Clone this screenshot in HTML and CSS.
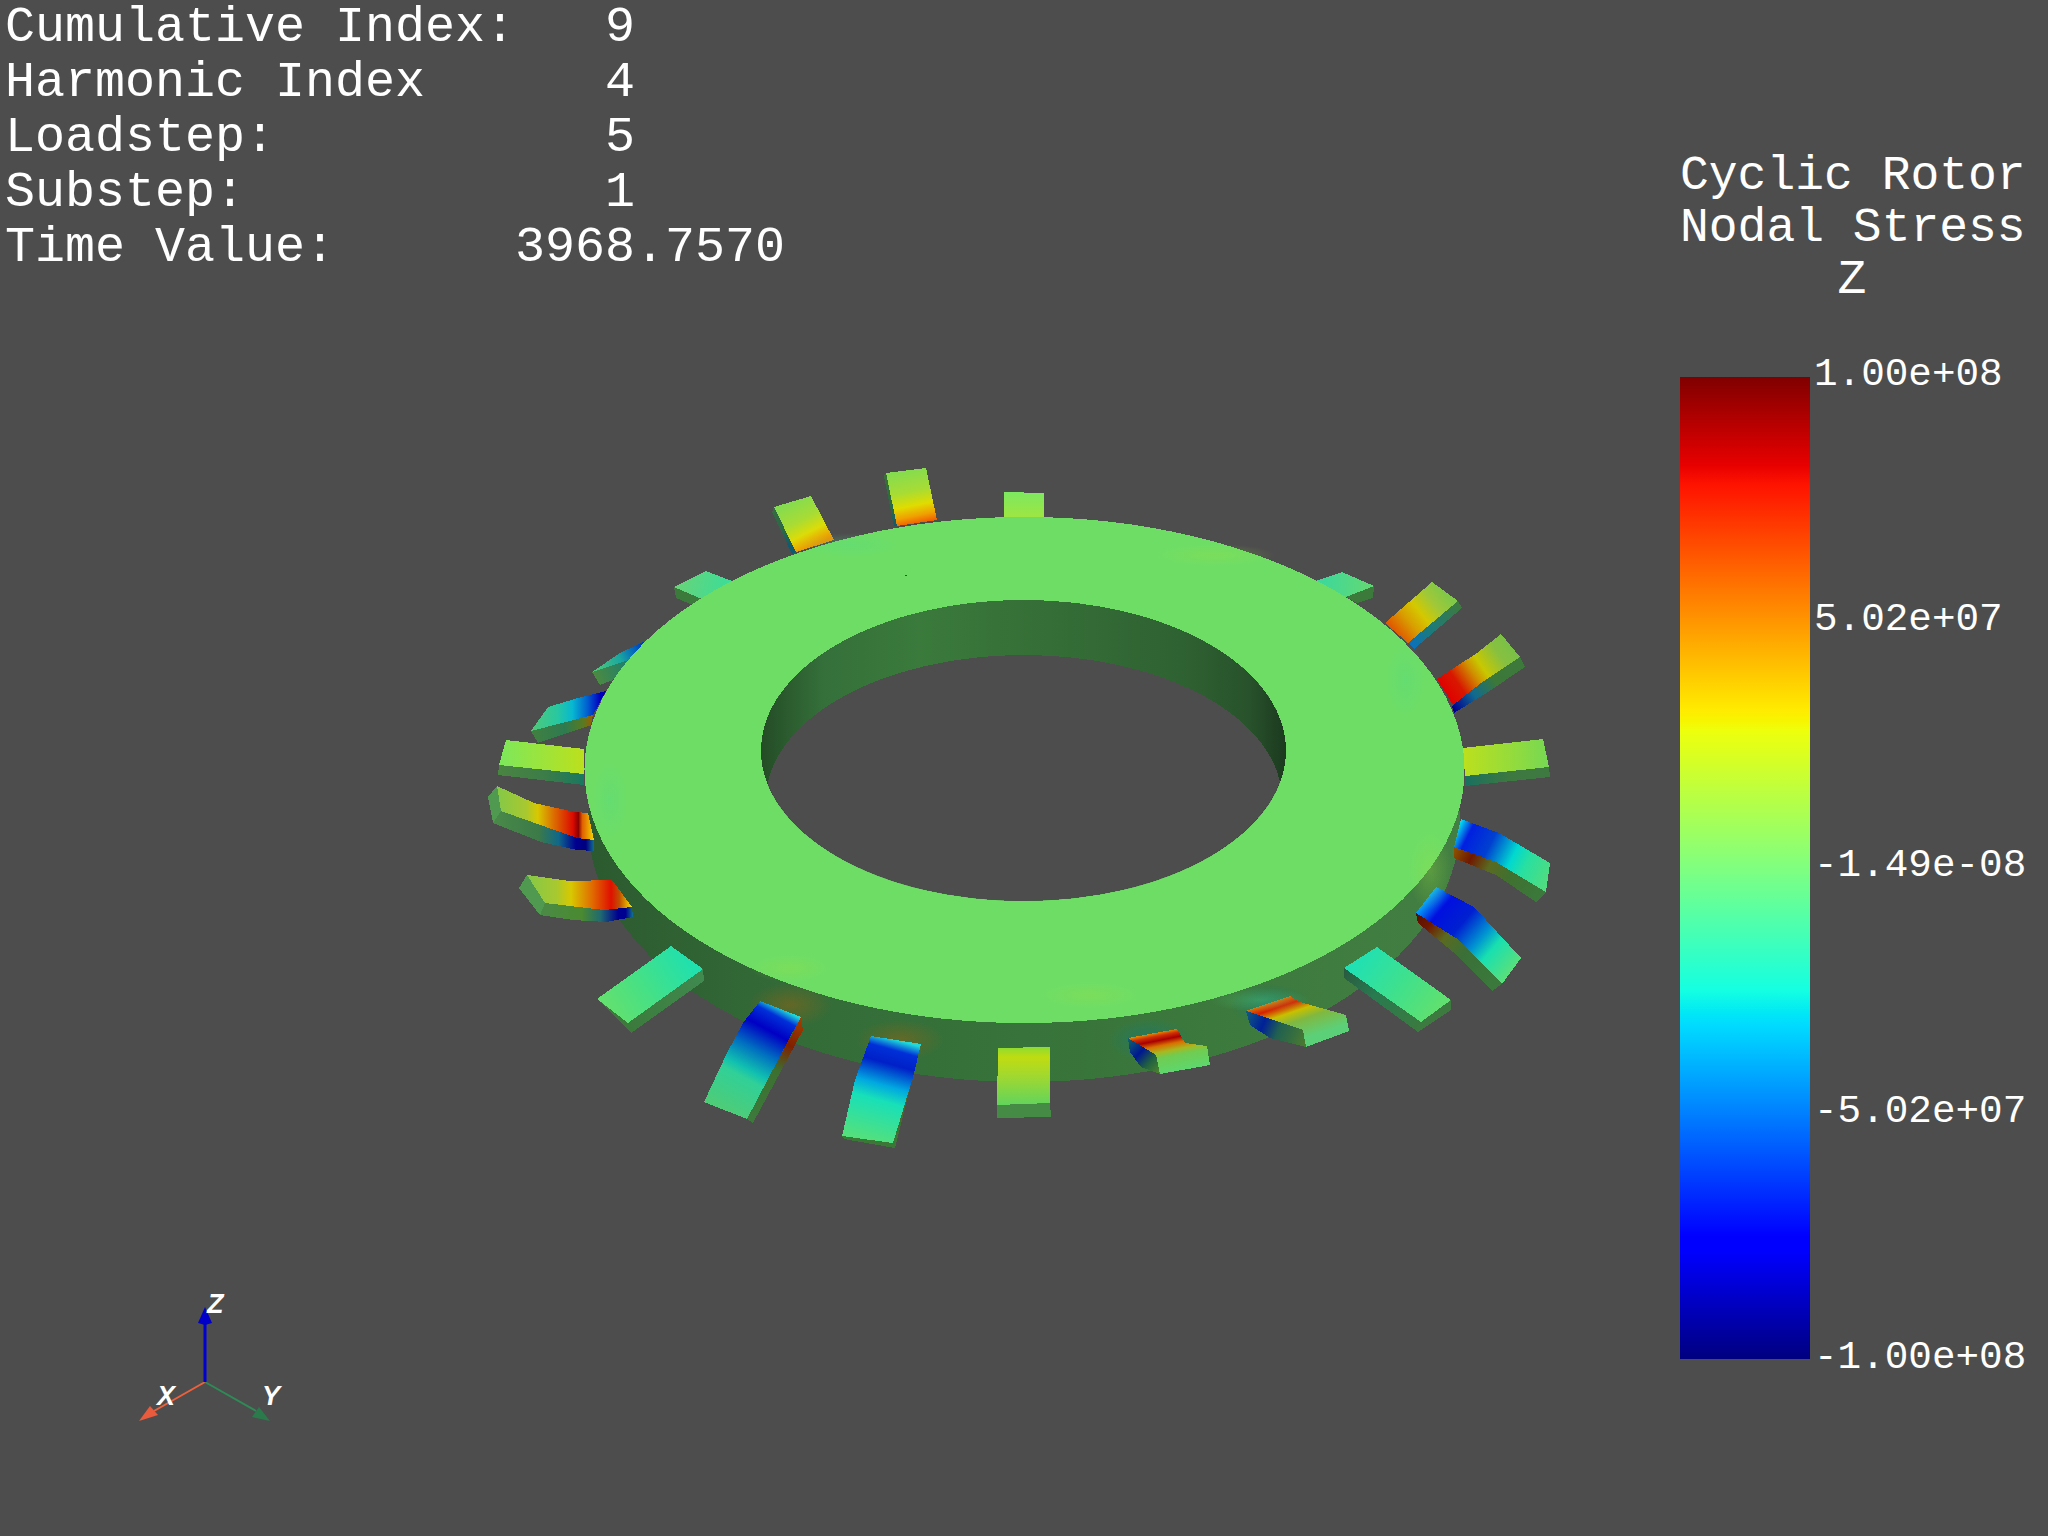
FILE: index.html
```html
<!DOCTYPE html>
<html lang="en">
<head>
<meta charset="utf-8">
<title>Cyclic Rotor Nodal Stress</title>
<link rel="stylesheet" href="styles.css">
</head>
<body>
<main class="viewport">
  <svg class="scene" viewBox="0 0 2048 1536" width="2048" height="1536" xmlns="http://www.w3.org/2000/svg">
    <defs>
      <linearGradient id="wall" gradientUnits="userSpaceOnUse" x1="588" y1="0" x2="1460" y2="0">
        <stop offset="0" stop-color="#2c5a30"/><stop offset=".25" stop-color="#346c38"/><stop offset=".5" stop-color="#37733a"/><stop offset=".75" stop-color="#3d7a3d"/><stop offset="1" stop-color="#437f42"/>
      </linearGradient>
      <linearGradient id="innerWall" gradientUnits="userSpaceOnUse" x1="761" y1="0" x2="1286" y2="0">
        <stop offset="0" stop-color="#244c26"/><stop offset=".12" stop-color="#35703a"/><stop offset=".3" stop-color="#3a7a3b"/><stop offset=".55" stop-color="#356e37"/><stop offset=".8" stop-color="#2f6232"/><stop offset=".93" stop-color="#28522b"/><stop offset="1" stop-color="#1c3a1f"/>
      </linearGradient>
      <linearGradient id="t1" gradientUnits="userSpaceOnUse" x1="0" y1="492" x2="0" y2="520"><stop offset="0" stop-color="#7ce860"/><stop offset="1" stop-color="#a2e63e"/></linearGradient>
      <linearGradient id="t2" gradientUnits="userSpaceOnUse" x1="906" y1="470" x2="917" y2="524"><stop offset="0" stop-color="#84dc50"/><stop offset=".4" stop-color="#a8dc34"/><stop offset=".66" stop-color="#e0dc00"/><stop offset=".85" stop-color="#f0a000"/><stop offset="1" stop-color="#f05a00"/></linearGradient>
      <linearGradient id="t2s" gradientUnits="userSpaceOnUse" x1="885" y1="474" x2="895" y2="526"><stop offset="0" stop-color="#3a7038"/><stop offset=".7" stop-color="#2a6648"/><stop offset="1" stop-color="#105a70"/></linearGradient>
      <linearGradient id="t3" gradientUnits="userSpaceOnUse" x1="792" y1="501" x2="815" y2="546"><stop offset="0" stop-color="#84dc50"/><stop offset=".42" stop-color="#a8dc34"/><stop offset=".7" stop-color="#dcdc08"/><stop offset="1" stop-color="#f09000"/></linearGradient>
      <linearGradient id="t4" gradientUnits="userSpaceOnUse" x1="680" y1="580" x2="725" y2="590"><stop offset="0" stop-color="#66d47a"/><stop offset="1" stop-color="#3edc96"/></linearGradient>
      <linearGradient id="t5" gradientUnits="userSpaceOnUse" x1="595" y1="670" x2="650" y2="645"><stop offset="0" stop-color="#50c878"/><stop offset=".45" stop-color="#1aa8a0"/><stop offset=".75" stop-color="#0060c0"/><stop offset="1" stop-color="#0020b8"/></linearGradient>
      <linearGradient id="t5s" gradientUnits="userSpaceOnUse" x1="595" y1="680" x2="628" y2="668"><stop offset="0" stop-color="#4e8a40"/><stop offset="1" stop-color="#20806a"/></linearGradient>
      <linearGradient id="t6" gradientUnits="userSpaceOnUse" x1="531" y1="0" x2="606" y2="0"><stop offset="0" stop-color="#52c878"/><stop offset=".35" stop-color="#28c8a0"/><stop offset=".55" stop-color="#08b8d0"/><stop offset=".75" stop-color="#0060d0"/><stop offset=".92" stop-color="#0000c0"/><stop offset="1" stop-color="#0000b0"/></linearGradient>
      <linearGradient id="t6s" gradientUnits="userSpaceOnUse" x1="531" y1="0" x2="593" y2="0"><stop offset="0" stop-color="#428040"/><stop offset=".55" stop-color="#2e7a50"/><stop offset=".85" stop-color="#5a7a20"/><stop offset="1" stop-color="#a05a00"/></linearGradient>
      <linearGradient id="t7" gradientUnits="userSpaceOnUse" x1="499" y1="0" x2="584" y2="0"><stop offset="0" stop-color="#7ce85c"/><stop offset="1" stop-color="#bce01c"/></linearGradient>
      <linearGradient id="t7s" gradientUnits="userSpaceOnUse" x1="499" y1="0" x2="584" y2="0"><stop offset="0" stop-color="#4a8442"/><stop offset=".55" stop-color="#3c7c48"/><stop offset="1" stop-color="#187860"/></linearGradient>
      <linearGradient id="t8" gradientUnits="userSpaceOnUse" x1="497" y1="0" x2="594" y2="0"><stop offset="0" stop-color="#84c848"/><stop offset=".3" stop-color="#a8c830"/><stop offset=".42" stop-color="#d8c800"/><stop offset=".58" stop-color="#dc7000"/><stop offset=".78" stop-color="#dc0c00"/><stop offset=".84" stop-color="#8a0000"/><stop offset=".88" stop-color="#e06000"/><stop offset="1" stop-color="#f4d800"/></linearGradient>
      <linearGradient id="t8s" gradientUnits="userSpaceOnUse" x1="493" y1="0" x2="594" y2="0"><stop offset="0" stop-color="#4a8a48"/><stop offset=".45" stop-color="#3c7a48"/><stop offset=".65" stop-color="#10688a"/><stop offset=".82" stop-color="#000090"/><stop offset=".92" stop-color="#000080"/><stop offset="1" stop-color="#107090"/></linearGradient>
      <linearGradient id="t9" gradientUnits="userSpaceOnUse" x1="527" y1="0" x2="632" y2="0"><stop offset="0" stop-color="#84c848"/><stop offset=".28" stop-color="#a8c830"/><stop offset=".42" stop-color="#d8c800"/><stop offset=".62" stop-color="#e06c00"/><stop offset=".8" stop-color="#e01000"/><stop offset=".88" stop-color="#c05000"/><stop offset="1" stop-color="#f8e000"/></linearGradient>
      <linearGradient id="t9s" gradientUnits="userSpaceOnUse" x1="540" y1="0" x2="633" y2="0"><stop offset="0" stop-color="#4a8a48"/><stop offset=".45" stop-color="#4a8a30"/><stop offset=".65" stop-color="#206a70"/><stop offset=".84" stop-color="#000090"/><stop offset=".92" stop-color="#000090"/><stop offset="1" stop-color="#107090"/></linearGradient>
      <linearGradient id="t10" gradientUnits="userSpaceOnUse" x1="690" y1="960" x2="612" y2="1012"><stop offset="0" stop-color="#20e0ae"/><stop offset=".6" stop-color="#48e084"/><stop offset="1" stop-color="#62e070"/></linearGradient>
      <linearGradient id="t10s" gradientUnits="userSpaceOnUse" x1="704" y1="975" x2="630" y2="1030"><stop offset="0" stop-color="#408a50"/><stop offset="1" stop-color="#3c7a3c"/></linearGradient>
      <linearGradient id="t11" gradientUnits="userSpaceOnUse" x1="781" y1="1008" x2="726" y2="1110"><stop offset="0" stop-color="#20d8d8"/><stop offset=".08" stop-color="#0030d8"/><stop offset=".22" stop-color="#0000c4"/><stop offset=".42" stop-color="#0070c0"/><stop offset=".6" stop-color="#10c0b0"/><stop offset=".68" stop-color="#30d098"/><stop offset="1" stop-color="#4ecc78"/></linearGradient>
      <linearGradient id="t11s" gradientUnits="userSpaceOnUse" x1="802" y1="1020" x2="750" y2="1120"><stop offset="0" stop-color="#a04000"/><stop offset=".25" stop-color="#802000"/><stop offset=".5" stop-color="#3c7030"/><stop offset="1" stop-color="#3c7a3c"/></linearGradient>
      <linearGradient id="t12" gradientUnits="userSpaceOnUse" x1="896" y1="1040" x2="868" y2="1140"><stop offset="0" stop-color="#20d8d8"/><stop offset=".1" stop-color="#0030d8"/><stop offset=".24" stop-color="#0020c8"/><stop offset=".45" stop-color="#00a8e0"/><stop offset=".6" stop-color="#18e0b8"/><stop offset="1" stop-color="#54e07c"/></linearGradient>
      <linearGradient id="t12s" gradientUnits="userSpaceOnUse" x1="921" y1="1044" x2="893" y2="1148"><stop offset="0" stop-color="#a03000"/><stop offset=".3" stop-color="#5a5a20"/><stop offset="1" stop-color="#3a7838"/></linearGradient>
      <linearGradient id="t13" gradientUnits="userSpaceOnUse" x1="0" y1="1048" x2="0" y2="1105"><stop offset="0" stop-color="#90dc30"/><stop offset=".16" stop-color="#c0dc10"/><stop offset=".5" stop-color="#a0d830"/><stop offset="1" stop-color="#62d45c"/></linearGradient>
      <linearGradient id="t14" gradientUnits="userSpaceOnUse" x1="1150" y1="1031" x2="1159" y2="1076"><stop offset="0" stop-color="#f0d000"/><stop offset=".14" stop-color="#d03000"/><stop offset=".24" stop-color="#a80000"/><stop offset=".36" stop-color="#d87000"/><stop offset=".5" stop-color="#a8b820"/><stop offset=".62" stop-color="#70cc50"/><stop offset="1" stop-color="#5cd870"/></linearGradient>
      <linearGradient id="t14s" gradientUnits="userSpaceOnUse" x1="1128" y1="1040" x2="1160" y2="1070"><stop offset="0" stop-color="#106070"/><stop offset=".4" stop-color="#001890"/><stop offset=".7" stop-color="#206040"/><stop offset="1" stop-color="#4a8030"/></linearGradient>
      <linearGradient id="t15" gradientUnits="userSpaceOnUse" x1="1266" y1="999" x2="1282" y2="1046"><stop offset="0" stop-color="#f0d800"/><stop offset=".12" stop-color="#e06000"/><stop offset=".24" stop-color="#d82000"/><stop offset=".42" stop-color="#c8c000"/><stop offset=".62" stop-color="#80b840"/><stop offset="1" stop-color="#5cd078"/></linearGradient>
      <linearGradient id="t15s" gradientUnits="userSpaceOnUse" x1="1246" y1="1015" x2="1306" y2="1040"><stop offset="0" stop-color="#105880"/><stop offset=".3" stop-color="#002098"/><stop offset=".55" stop-color="#206050"/><stop offset="1" stop-color="#4a7a30"/></linearGradient>
      <linearGradient id="t16" gradientUnits="userSpaceOnUse" x1="1360" y1="955" x2="1436" y2="1010"><stop offset="0" stop-color="#20e0b4"/><stop offset=".55" stop-color="#40e08c"/><stop offset="1" stop-color="#60e070"/></linearGradient>
      <linearGradient id="t16s" gradientUnits="userSpaceOnUse" x1="1344" y1="970" x2="1420" y2="1030"><stop offset="0" stop-color="#2a5a40"/><stop offset=".4" stop-color="#287a50"/><stop offset="1" stop-color="#3c7a40"/></linearGradient>
      <linearGradient id="t17" gradientUnits="userSpaceOnUse" x1="1424" y1="898" x2="1510" y2="972"><stop offset="0" stop-color="#08c0ff"/><stop offset=".18" stop-color="#0010e0"/><stop offset=".4" stop-color="#0020d0"/><stop offset=".62" stop-color="#0098d0"/><stop offset=".75" stop-color="#18e0b0"/><stop offset="1" stop-color="#58e07c"/></linearGradient>
      <linearGradient id="t17s" gradientUnits="userSpaceOnUse" x1="1416" y1="918" x2="1498" y2="988"><stop offset="0" stop-color="#5a1000"/><stop offset=".14" stop-color="#701800"/><stop offset=".32" stop-color="#5a6a20"/><stop offset=".55" stop-color="#3a7038"/><stop offset="1" stop-color="#3a7a3c"/></linearGradient>
      <linearGradient id="t18" gradientUnits="userSpaceOnUse" x1="1456" y1="832" x2="1548" y2="878"><stop offset="0" stop-color="#08d8f0"/><stop offset=".12" stop-color="#0020e0"/><stop offset=".35" stop-color="#0040d0"/><stop offset=".6" stop-color="#00d8d0"/><stop offset=".75" stop-color="#28e0a0"/><stop offset="1" stop-color="#50dc80"/></linearGradient>
      <linearGradient id="t18s" gradientUnits="userSpaceOnUse" x1="1454" y1="852" x2="1542" y2="898"><stop offset="0" stop-color="#8a5000"/><stop offset=".18" stop-color="#701800"/><stop offset=".38" stop-color="#5a6a20"/><stop offset=".6" stop-color="#407030"/><stop offset="1" stop-color="#3a7a3c"/></linearGradient>
      <linearGradient id="t19" gradientUnits="userSpaceOnUse" x1="1463" y1="0" x2="1549" y2="0"><stop offset="0" stop-color="#bce01c"/><stop offset="1" stop-color="#76d854"/></linearGradient>
      <linearGradient id="t19s" gradientUnits="userSpaceOnUse" x1="1465" y1="0" x2="1550" y2="0"><stop offset="0" stop-color="#187060"/><stop offset=".5" stop-color="#3c7840"/><stop offset="1" stop-color="#3e7a40"/></linearGradient>
      <linearGradient id="t20" gradientUnits="userSpaceOnUse" x1="1444" y1="692" x2="1512" y2="645"><stop offset="0" stop-color="#e00000"/><stop offset=".2" stop-color="#d81800"/><stop offset=".42" stop-color="#d09000"/><stop offset=".55" stop-color="#c8c800"/><stop offset=".8" stop-color="#88c040"/><stop offset="1" stop-color="#78c048"/></linearGradient>
      <linearGradient id="t20s" gradientUnits="userSpaceOnUse" x1="1454" y1="710" x2="1522" y2="662"><stop offset="0" stop-color="#000090"/><stop offset=".3" stop-color="#106a90"/><stop offset=".6" stop-color="#3c7838"/><stop offset="1" stop-color="#3c7a3c"/></linearGradient>
      <linearGradient id="t21" gradientUnits="userSpaceOnUse" x1="1396" y1="633" x2="1445" y2="592"><stop offset="0" stop-color="#e05800"/><stop offset=".28" stop-color="#d8a000"/><stop offset=".5" stop-color="#d4c800"/><stop offset=".75" stop-color="#a0c838"/><stop offset="1" stop-color="#80c848"/></linearGradient>
      <linearGradient id="t21s" gradientUnits="userSpaceOnUse" x1="1410" y1="646" x2="1460" y2="604"><stop offset="0" stop-color="#0a70c0"/><stop offset=".35" stop-color="#1a7a80"/><stop offset="1" stop-color="#3e7a3c"/></linearGradient>
      <linearGradient id="t22" gradientUnits="userSpaceOnUse" x1="1325" y1="585" x2="1365" y2="590"><stop offset="0" stop-color="#40d898"/><stop offset="1" stop-color="#60d878"/></linearGradient>
      <radialGradient id="tintYellow"><stop offset="0" stop-color="#98e040" stop-opacity=".3"/><stop offset="1" stop-color="#98e040" stop-opacity="0"/></radialGradient>
      <radialGradient id="tintTeal"><stop offset="0" stop-color="#50dc88" stop-opacity=".3"/><stop offset="1" stop-color="#50dc88" stop-opacity="0"/></radialGradient>
      <radialGradient id="stainBrown"><stop offset="0" stop-color="#8a6418" stop-opacity=".55"/><stop offset="1" stop-color="#8a6418" stop-opacity="0"/></radialGradient>
      <radialGradient id="stainTeal"><stop offset="0" stop-color="#1a7a70" stop-opacity=".7"/><stop offset="1" stop-color="#1a7a70" stop-opacity="0"/></radialGradient>
      <clipPath id="holeClip"><ellipse cx="1023.5" cy="750.5" rx="262.5" ry="150.5"/></clipPath>
    </defs>

    <!-- rotor: far teeth, outer wall, near teeth, then the top face -->
    <g class="mesh">
      <polygon fill="url(#t1)" points="1004,492 1044,493 1044,522 1004,522"/>
      <polygon fill="url(#t2s)" points="884,476 886,473 897,526 894,526"/>
      <polygon fill="url(#t2)" points="886,473 926,468 937,520 897,526"/>
      <polygon fill="url(#t2s)" points="772,512 774,507 796,552 792,554"/>
      <polygon fill="url(#t3)" points="774,507 811,496 834,540 796,552"/>
      <polygon class="side" points="674,587 702,599 693,605 676,598"/>
      <polygon fill="url(#t4)" points="674,587 706,571 732,581 702,599"/>
      <polygon fill="url(#t5s)" points="592,672 629,660 613,680 600,685"/>
      <polygon fill="url(#t5)" points="592,672 620,653 650,639 629,660"/>
      <polygon fill="url(#t6s)" points="531,731 593,715 591,725 538,743"/>
      <polygon fill="url(#t6)" points="548,707 578,698 606,691 593,715 531,731"/>
      <polygon class="side" points="1346,597 1374,586 1373,598 1357,603"/>
      <polygon fill="url(#t22)" points="1316,581 1342,572 1374,586 1346,597"/>
      <polygon fill="url(#t21s)" points="1458,601 1462,608 1414,649 1408,643"/>
      <polygon fill="url(#t21)" points="1385,623 1432,582 1458,601 1408,643"/>
      <polygon fill="url(#t20s)" points="1520,657 1525,667 1488,692 1454,713 1452,706 1481,683"/>
      <polygon fill="url(#t20)" points="1437,679 1477,653 1501,634 1520,657 1481,683 1453,705"/>
      <polygon fill="url(#t19s)" points="1465,776 1549,767 1550,777 1465,786"/>
      <polygon fill="url(#t19)" points="1463,748 1543,739 1549,767 1465,776"/>
      <polygon fill="url(#t7s)" points="499,765 584,774 584,785 498,775"/>
      <polygon fill="url(#t7)" points="506,740 584,749 584,774 499,765"/>

      <ellipse class="wall" cx="1024" cy="823" rx="436" ry="259"/>
      <ellipse fill="url(#stainBrown)" cx="790" cy="1005" rx="42" ry="22"/>
      <ellipse fill="url(#stainBrown)" cx="900" cy="1040" rx="44" ry="20"/>
      <ellipse fill="url(#stainTeal)" cx="1150" cy="1040" rx="42" ry="22"/>
      <ellipse fill="url(#stainTeal)" cx="1270" cy="1005" rx="40" ry="22"/>

      <polygon class="capLight" points="497,786 488,797 493,823 501,811"/>
      <polygon fill="url(#t8s)" points="493,823 501,811 577,838 594,840 594,851 577,850 541,842"/>
      <polygon fill="url(#t8)" points="497,786 534,803 575,812 588,813 594,840 577,838 501,811"/>
      <polygon class="capLight" points="527,875 519,888 540,915 545,903"/>
      <polygon fill="url(#t9s)" points="540,915 545,903 604,910 632,907 633,917 606,922 573,920"/>
      <polygon fill="url(#t9)" points="527,875 569,881 612,880 632,907 604,910 545,903"/>
      <polygon fill="url(#t10s)" points="703,969 704,981 631,1033 597,999 628,1023"/>
      <polygon fill="url(#t10)" points="671,946 703,969 628,1023 597,999"/>
      <polygon fill="url(#t11s)" points="801,1017 803,1030 753,1123 747,1119 778,1060"/>
      <polygon fill="url(#t11)" points="760,1001 801,1017 790,1037 778,1060 747,1119 704,1102 727,1053 743,1023"/>
      <polygon fill="url(#t12s)" points="921,1044 895,1148 844,1139 842,1136 893,1143"/>
      <polygon fill="url(#t12)" points="871,1036 921,1044 913,1077 893,1143 842,1136 855,1080"/>
      <polygon class="capBottom" points="997,1105 1050,1103 1051,1117 997,1118"/>
      <polygon fill="url(#t13)" points="998,1048 1050,1047 1050,1103 997,1105"/>
      <polygon fill="url(#t14s)" points="1128,1038 1156,1055 1160,1074 1141,1067 1130,1052"/>
      <polygon fill="url(#t14)" points="1128,1038 1177,1029 1185,1043 1207,1046 1210,1065 1160,1074 1156,1055"/>
      <polygon fill="url(#t15s)" points="1246,1011 1303,1030 1306,1047 1270,1038 1250,1025"/>
      <polygon fill="url(#t15)" points="1246,1011 1290,996 1300,1002 1346,1015 1349,1031 1306,1047 1303,1030"/>
      <polygon fill="url(#t16s)" points="1344,968 1421,1022 1451,1000 1451,1010 1418,1032 1344,978"/>
      <polygon fill="url(#t16)" points="1377,947 1451,1000 1421,1022 1344,968"/>
      <polygon fill="url(#t17s)" points="1416,913 1459,940 1502,984 1492,991 1459,957 1418,923"/>
      <polygon fill="url(#t17)" points="1436,887 1474,907 1521,958 1502,984 1459,940 1416,913"/>
      <polygon fill="url(#t18s)" points="1454,847 1496,862 1546,892 1536,902 1496,875 1454,858"/>
      <polygon fill="url(#t18)" points="1461,819 1499,833 1550,863 1546,892 1496,862 1454,847"/>

      <path class="top" fill-rule="evenodd" d="M584.5 770a440 253 0 1 0 880 0a440 253 0 1 0 -880 0zM761 750.5a262.5 150.5 0 1 0 525 0a262.5 150.5 0 1 0 -525 0z"/>
      <ellipse fill="url(#tintYellow)" cx="1090" cy="995" rx="50" ry="13"/>
      <ellipse fill="url(#tintYellow)" cx="790" cy="968" rx="40" ry="14"/>
      <ellipse fill="url(#tintYellow)" cx="1430" cy="870" rx="22" ry="40"/>
      <ellipse fill="url(#tintTeal)" cx="1405" cy="680" rx="20" ry="38"/>
      <ellipse fill="url(#tintTeal)" cx="610" cy="800" rx="18" ry="40"/>
      <ellipse fill="url(#tintTeal)" cx="1260" cy="1000" rx="50" ry="12"/>
      <ellipse fill="url(#tintYellow)" cx="1215" cy="555" rx="60" ry="11"/>
      <ellipse fill="url(#tintTeal)" cx="850" cy="545" rx="50" ry="12"/>

      <ellipse fill="url(#innerWall)" cx="1023.5" cy="750.5" rx="262.5" ry="150.5"/>
      <g clip-path="url(#holeClip)">
        <ellipse class="bg" cx="1024" cy="800" rx="258" ry="145"/>
      </g>
      <rect class="speck" x="905" y="575" width="2" height="1"/>
    </g>

    <!-- orientation triad -->
    <g class="triad">
      <line class="axisX" x1="205" y1="1382" x2="154" y2="1411"/>
      <line class="axisY" x1="205" y1="1382" x2="256" y2="1411"/>
      <line class="axisZ" x1="205" y1="1382" x2="205" y2="1322"/>
      <polygon class="coneX" points="139,1421 150,1406 158,1415"/>
      <polygon class="coneY" points="270,1421 259,1407 252,1417"/>
      <polygon class="coneZ" points="205,1307 198,1323 205,1325 212,1323"/>
      <text class="axisLabel" x="207" y="1313">Z</text>
      <text class="axisLabel" x="157" y="1405">X</text>
      <text class="axisLabel" x="262" y="1405">Y</text>
    </g>
  </svg>

  <pre class="annotation">Cumulative Index:   9
Harmonic Index      4
Loadstep:           5
Substep:            1
Time Value:      3968.7570</pre>

  <aside class="legend">
    <h1 class="legendTitle">Cyclic Rotor<br>Nodal Stress<br>Z</h1>
    <div class="legendBody">
      <div class="colorbar"></div>
      <ul class="ticks">
        <li>1.00e+08</li>
        <li>5.02e+07</li>
        <li>-1.49e-08</li>
        <li>-5.02e+07</li>
        <li>-1.00e+08</li>
      </ul>
    </div>
  </aside>
</main>
</body>
</html>
```

FILE: styles.css
```css
* { box-sizing: border-box; }

html, body {
  margin: 0;
  padding: 0;
  background: #4d4d4d;
}

.viewport {
  position: relative;
  width: 2048px;
  height: 1536px;
  overflow: hidden;
  background: #4d4d4d;
  color: #fff;
  font-family: "Liberation Mono", "DejaVu Sans Mono", monospace;
}

.scene {
  position: absolute;
  inset: 0;
  display: block;
}

.mesh { shape-rendering: crispEdges; }
.wall { fill: url(#wall); }
.top { fill: #6edd66; }
.bg { fill: #4d4d4d; }
.side { fill: #3c7a3c; }
.capLight { fill: #4f9a50; }
.capBottom { fill: #458a45; }
.speck { fill: #2c5a30; }

.axisX { stroke: #f0603c; stroke-width: 2; }
.axisY { stroke: #2e8b57; stroke-width: 2; }
.axisZ { stroke: #0000d0; stroke-width: 3; }
.coneX { fill: #ea5a3c; }
.coneY { fill: #2a7a4c; }
.coneZ { fill: #0000c8; }
.axisLabel {
  fill: #fff;
  font-family: "Liberation Sans", Arial, sans-serif;
  font-style: italic;
  font-weight: 700;
  font-size: 27px;
}

.annotation {
  position: absolute;
  left: 5px;
  top: 0;
  margin: 0;
  font: 50px/55px "Liberation Mono", "DejaVu Sans Mono", monospace;
}

.legend {
  position: absolute;
  left: 1680px;
  top: 150px;
  display: flex;
  flex-direction: column;
  gap: 71px;
}

.legendTitle {
  width: 344px;
  margin: 0;
  font: 400 48px/52px "Liberation Mono", "DejaVu Sans Mono", monospace;
  text-align: center;
  white-space: nowrap;
}

.legendBody {
  display: flex;
  align-items: stretch;
  gap: 4px;
}

.colorbar {
  width: 130px;
  height: 982px;
  background: linear-gradient(to top,
    #000080 0%, #0000ff 11%, #0000ff 12.5%, #00dbff 34%, #00e5f7 35%,
    #14ffe2 37.5%, #80ff80 50%, #eeff0c 64%, #f7f500 65%, #ffec00 66%,
    #ff1300 89%, #e80000 91%, #800000 100%);
}

.ticks {
  display: flex;
  flex-direction: column;
  justify-content: space-between;
  margin: -25.5px 0 -21.5px;
  padding: 0;
  list-style: none;
  font-size: 39.3px;
  line-height: 46px;
}
```
